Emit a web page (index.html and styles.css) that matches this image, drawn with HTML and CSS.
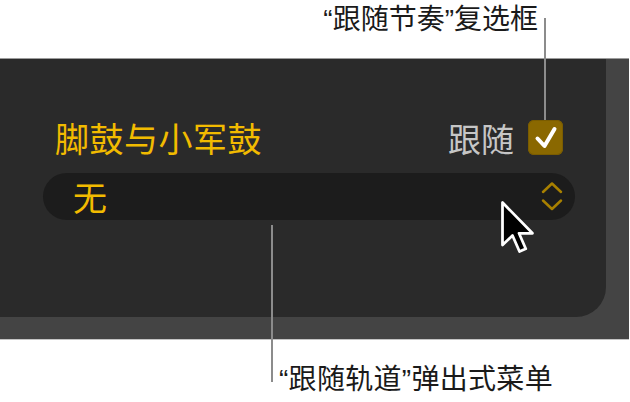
FILE: index.html
```html
<!DOCTYPE html>
<html lang="zh-CN">
<head>
  <meta charset="UTF-8">
  <meta name="viewport" content="width=device-width, initial-scale=1.0">
  <title>跟随轨道</title>
  <link rel="stylesheet" href="styles.css">
</head>
<body>
  <div class="stage">
    <p class="callout callout-top">“跟随节奏”复选框</p>

    <div class="frame">
      <div class="panel">
        <div class="track-row">
          <span class="track-name">脚鼓与小军鼓</span>
          <label class="follow">
            <span class="follow-text">跟随</span>
            <span class="checkbox">
              <svg viewBox="0 0 35 35" width="35" height="35">
                <path d="M9.5 18.5 L16.5 26 L26.5 9" fill="none" stroke="#fff" stroke-width="4" stroke-linecap="round" stroke-linejoin="round"/>
              </svg>
            </span>
          </label>
        </div>

        <div class="popup">
          <span class="popup-value">无</span>
          <svg class="stepper" viewBox="0 0 22 32" width="22" height="32">
            <path d="M2 11 L11 2.5 L20 11" fill="none" stroke="#a88000" stroke-width="2.5" stroke-linecap="round" stroke-linejoin="round"/>
            <path d="M2 19.5 L11 28 L20 19.5" fill="none" stroke="#a88000" stroke-width="2.5" stroke-linecap="round" stroke-linejoin="round"/>
          </svg>
        </div>
      </div>
    </div>

    <p class="callout callout-bottom">“跟随轨道”弹出式菜单</p>

    <!-- leader lines from the captions to the controls -->
    <span class="leader leader-top"></span>
    <span class="leader leader-bottom"></span>

    <!-- mouse pointer over the popup -->
    <svg class="pointer" viewBox="-1 -1 14 22" width="35" height="55">
      <path d="M0 0 L0 17 L4 13.2 L6.8 19.6 L9.3 18.5 L6.6 12.3 L12 12.3 Z" fill="#000" stroke="#fff" stroke-width="1.1" stroke-linejoin="round"/>
    </svg>
  </div>
</body>
</html>
```

FILE: styles.css
```css
body {
  margin: 0;
  background: #fff;
  font-family: "Liberation Sans", "Noto Sans CJK SC", sans-serif;
}
.stage {
  position: relative;
  width: 630px;
  height: 402px;
  overflow: hidden;
}
.callout {
  margin: 0;
  font-size: 28px;
  line-height: 40px;
  color: #1a1a1a;
}
.callout-top {
  height: 58px;
  text-align: right;
  padding-right: 92px;
  box-sizing: border-box;
}
.callout-bottom {
  margin-top: 20px;
  padding-left: 279px;
  letter-spacing: 0.3px;
}
.frame {
  width: 629px;
  height: 282px;
  background: #444;
  border-top: 1px solid #9c9c9c;
  border-bottom: 1px solid #c4c4c4;
  box-sizing: border-box;
}
.panel {
  width: 606px;
  height: 258px;
  background: #2a2a2a;
  border-bottom-right-radius: 30px;
  padding-top: 61px;
  box-sizing: border-box;
}
.track-row {
  display: flex;
  align-items: center;
  justify-content: space-between;
  height: 35px;
  padding: 0 43px 0 55px;
}
.track-name {
  font-size: 34px;
  letter-spacing: 0.5px;
  color: #f2bb00;
}
.follow {
  display: flex;
  align-items: center;
  gap: 14px;
}
.follow-text {
  font-size: 33px;
  color: #c6c6c6;
}
.checkbox {
  display: block;
  width: 35px;
  height: 35px;
  border-radius: 6px;
  background: #8a6800;
  box-shadow: inset 0 0 0 1px #7a5c00;
}
.checkbox svg {
  display: block;
}
.popup {
  display: flex;
  align-items: center;
  justify-content: space-between;
  margin: 18px 31px 0 43px;
  height: 47px;
  padding: 0 12px 0 30px;
  border-radius: 24px;
  background: #1c1c1c;
}
.popup-value {
  font-size: 34px;
  color: #f2bb00;
}
.stepper {
  display: block;
}
.leader {
  position: absolute;
  width: 2px;
  background: #8c8c8c;
}
.leader-top {
  left: 544px;
  top: 18px;
  height: 102px;
}
.leader-bottom {
  left: 271px;
  top: 225px;
  height: 157px;
}
.pointer {
  position: absolute;
  left: 500px;
  top: 200px;
}
```
